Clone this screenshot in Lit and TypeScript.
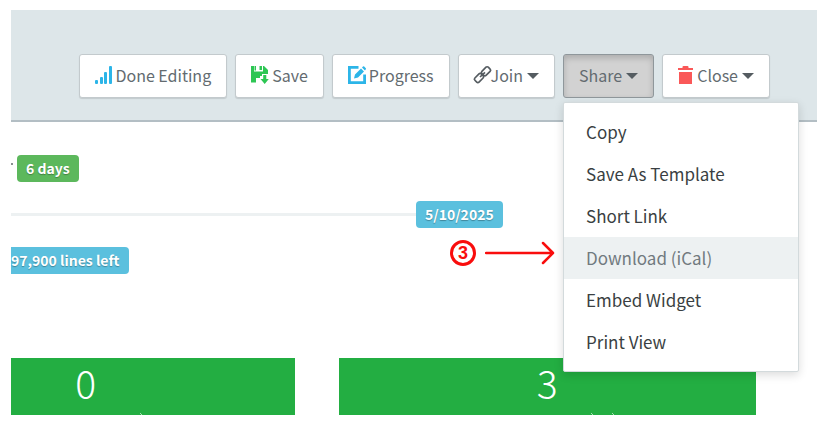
import { LitElement, html, css, svg } from "lit";
import { customElement, property } from "lit/decorators.js";

const icons: Record<string, unknown> = {
  signal: svg`<g fill="#2cb5e8"><rect x="0" y="14" width="3" height="4" rx="1"/><rect x="5" y="11" width="3" height="7" rx="1"/><rect x="9" y="6" width="3" height="12" rx="1"/><rect x="14" y="0" width="3" height="18" rx="1"/></g>`,
  save: svg`<path fill="#2dc653" fill-rule="evenodd" d="M0 0H3V5.500H12V0H13L17 4V8H11V10H9V12H5V16.500H0ZM8.500 0H11V4H8.500ZM3.500 0H5V4.500H3.500Z"/><path fill="#2dc653" d="M12.200 9H15.300V13H17.800L13.700 18L9.500 13H12.200Z"/>`,
  edit: svg`<path fill="none" stroke="#2cb5e8" stroke-width="2.800" d="M10.500 1.400H1.400V16.600H16.600V8.500"/><path fill="#2cb5e8" d="M6 12.500L7 8.500L13 2.500L16 5.500L10 11.500ZM14 1.500L15 .5Q15.500 0 16.200 .6L17.800 2.200Q18.300 2.800 17.800 3.300L17 4.500Z"/>`,
  link: svg`<g fill="none" stroke="#555c61" stroke-width="1.700"><rect x="-4.500" y="-2.900" width="9" height="5.800" rx="1.600" transform="translate(12 5.300) rotate(-45)"/><rect x="-4.500" y="-2.900" width="9" height="5.800" rx="1.600" transform="translate(5 12) rotate(-45)"/><path d="M6 11L11 6.300"/></g>`,
  trash: svg`<path fill="#fa5858" d="M0 2H4.500V1Q4.500 0 5.500 0H9.500Q10.500 0 10.500 1V2H15V4H0ZM1 6H14V18H1Z"/>`,
};

@customElement("tool-button")
export class ToolButton extends LitElement {
  @property() label = "";
  @property() icon = "";
  @property({ type: Number }) iconWidth = 18;
  @property({ type: Boolean }) caret = false;
  @property({ type: Boolean }) active = false;

  static styles = css`
    :host { display: block; }
    button {
      display: flex;
      align-items: center;
      height: 44px;
      box-sizing: border-box;
      padding: 0 15px 2px;
      border: 1px solid #c3cacd;
      border-radius: 3px;
      background: #fff;
      box-shadow: 0 1px 1px rgba(0, 0, 0, 0.12);
      color: #636b70;
      font: 400 16px/24px "Noto Sans CJK SC", sans-serif;
      white-space: nowrap;
      cursor: pointer;
    }
    button.active {
      background: #d2d2d2;
      border-color: #8f979b;
      box-shadow: inset 0 3px 6px rgba(0, 0, 0, 0.18);
    }
    .icon { height: 18px; flex: none; margin-right: 3px; overflow: visible; }
    .icon.link { margin-right: 0; }
    .icon.trash { margin-right: 4px; }
    .caret {
      margin-left: 4px;
      margin-top: 2px;
      border: 6px solid transparent;
      border-top-color: #555c61;
      border-bottom: 0;
    }
  `;

  render() {
    return html`<button class=${this.active ? "active" : ""} aria-haspopup=${this.caret ? "menu" : "false"}>
      ${this.icon
        ? html`<svg class="icon ${this.icon}" width=${this.iconWidth} viewBox="0 0 ${this.iconWidth} 18" aria-hidden="true">${icons[this.icon]}</svg>`
        : ""}<span>${this.label}</span>${this.caret ? html`<span class="caret"></span>` : ""}
    </button>`;
  }
}

@customElement("app-root")
export class AppRoot extends LitElement {
  static styles = css`
    :host {
      display: block;
      padding: 10px 11px 14px;
      background: #fff;
      font-family: "Noto Sans CJK SC", sans-serif;
    }
    .frame { overflow: hidden; }
    .toolbar {
      display: flex;
      justify-content: flex-end;
      gap: 8px;
      padding: 44px 47px 22px 0;
      background: #dde6e9;
      border-bottom: 2px solid #b3bec4;
    }
    .share { position: relative; }
    .menu {
      position: absolute;
      z-index: 2;
      top: 48px;
      left: 0;
      width: 236px;
      box-sizing: border-box;
      padding: 8px 0;
      border: 1px solid #d3dadc;
      border-radius: 2px;
      background: #fff;
      box-shadow: 0 3px 10px rgba(0, 0, 0, 0.14);
    }
    .item {
      display: block;
      padding: 0 22px;
      font-size: 17px;
      line-height: 42px;
      color: #3a3f42;
      text-decoration: none;
      white-space: nowrap;
    }
    .item.hover { background: #edf1f2; color: #717a7f; }
    .callout {
      position: absolute;
      right: 100%;
      top: 137px;
      margin-right: 9px;
      display: flex;
      align-items: center;
      gap: 9px;
      color: #f90d0d;
    }
    .step {
      width: 26px;
      height: 26px;
      box-sizing: border-box;
      border: 3px solid;
      border-radius: 50%;
      font: 700 18px/20px "Liberation Sans", sans-serif;
      text-align: center;
    }
    .timeline { padding-top: 33px; height: 203px; }
    .row { display: flex; align-items: center; height: 27px; margin-bottom: 19px; }
    .speck { width: 2px; height: 2px; margin: 0 4px 10px 0; background: #8a8f92; }
    .track { width: 405px; height: 3px; background: #edf1f2; }
    .badge {
      padding: 0 9px;
      border-radius: 4px;
      font-size: 14px;
      font-weight: 700;
      line-height: 27px;
      color: #fff;
      white-space: nowrap;
      text-shadow: 0 1px 1px rgba(0, 0, 0, 0.3);
    }
    .green { background: #5cb85c; }
    .blue { background: #5bc0de; }
    .cut { padding-left: 0; border-radius: 0 4px 4px 0; }
    .tiles { display: flex; gap: 44px; margin: 0 61px 0 -134px; }
    .tile {
      flex: 1;
      height: 57px;
      position: relative;
      background: #23ae42;
      color: #fff;
      font-size: 39px;
      font-weight: 300;
      line-height: 48px;
      text-align: center;
    }
    .marks { position: absolute; bottom: 0; left: 50%; opacity: 0.6; }
  `;

  private items = ["Copy", "Save As Template", "Short Link", "Download (iCal)", "Embed Widget", "Print View"];

  private tiles = [
    { value: 0, marks: "M54 0L56 2" },
    { value: 3, marks: "M44 0L46 2M65 0L67 2" },
  ];

  render() {
    return html`<div class="frame">
      <header class="toolbar">
        <tool-button label="Done Editing" icon="signal" .iconWidth=${17}></tool-button>
        <tool-button label="Save" icon="save" .iconWidth=${18}></tool-button>
        <tool-button label="Progress" icon="edit" .iconWidth=${18}></tool-button>
        <tool-button label="Join" icon="link" .iconWidth=${17} caret></tool-button>
        <div class="share">
          <tool-button label="Share" caret active></tool-button>
          <nav class="menu">
            ${this.items.map((t, i) => html`<a href="#" class="item ${i === 3 ? "hover" : ""}">${t}</a>`)}
            <div class="callout">
              <div class="step">3</div>
              <svg width="70" height="24" fill="none" stroke="currentColor" stroke-width="2.500" aria-hidden="true">
                <path d="M1 12H68M58 2L68 12L58 22" stroke-linejoin="round" stroke-linecap="round" />
              </svg>
            </div>
          </nav>
        </div>
        <tool-button label="Close" icon="trash" .iconWidth=${15} caret></tool-button>
      </header>
      <main>
        <section class="timeline">
          <div class="row"><span class="speck"></span><span class="badge green">6 days</span></div>
          <div class="row"><span class="track"></span><span class="badge blue">5/10/2025</span></div>
          <div class="row"><span class="badge blue cut">97,900 lines left</span></div>
        </section>
        <section class="tiles">
          ${this.tiles.map(
            (t) => html`<div class="tile">${t.value}<svg class="marks" width="70" height="2" stroke="#fff" aria-hidden="true"><path d=${t.marks} /></svg></div>`
          )}
        </section>
      </main>
    </div>`;
  }
}
